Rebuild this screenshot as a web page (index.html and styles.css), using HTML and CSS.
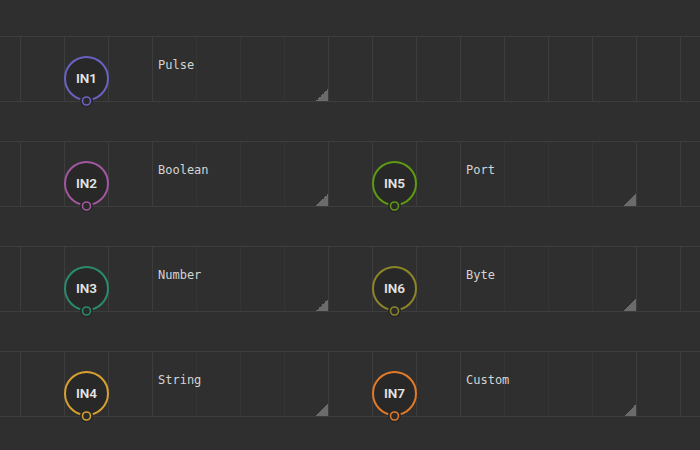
FILE: index.html
```html
<!DOCTYPE html>
<html>
<head>
<meta charset="utf-8">
<link rel="stylesheet" href="styles.css">
</head>
<body>
<div class="canvas">
  <div class="strip">
    <svg class="node col-a" width="50" height="56" viewBox="0 0 50 56"><circle class="ring" cx="24.5" cy="24.5" r="21.5" stroke="#6a62c2"/><circle class="cut" cx="24.5" cy="47" r="6.5"/><circle class="pin" cx="24.5" cy="47" r="4" stroke="#6a62c2"/><text x="24.5" y="29">IN1</text></svg>
    <div class="comment col-a">Pulse</div>
  </div>
  <div class="strip">
    <svg class="node col-a" width="50" height="56" viewBox="0 0 50 56"><circle class="ring" cx="24.5" cy="24.5" r="21.5" stroke="#a0579f"/><circle class="cut" cx="24.5" cy="47" r="6.5"/><circle class="pin" cx="24.5" cy="47" r="4" stroke="#a0579f"/><text x="24.5" y="29">IN2</text></svg>
    <div class="comment col-a">Boolean</div>
    <svg class="node col-b" width="50" height="56" viewBox="0 0 50 56"><circle class="ring" cx="24.5" cy="24.5" r="21.5" stroke="#5e9a12"/><circle class="cut" cx="24.5" cy="47" r="6.5"/><circle class="pin" cx="24.5" cy="47" r="4" stroke="#5e9a12"/><text x="24.5" y="29">IN5</text></svg>
    <div class="comment col-b">Port</div>
  </div>
  <div class="strip">
    <svg class="node col-a" width="50" height="56" viewBox="0 0 50 56"><circle class="ring" cx="24.5" cy="24.5" r="21.5" stroke="#2a8a6c"/><circle class="cut" cx="24.5" cy="47" r="6.5"/><circle class="pin" cx="24.5" cy="47" r="4" stroke="#2a8a6c"/><text x="24.5" y="29">IN3</text></svg>
    <div class="comment col-a">Number</div>
    <svg class="node col-b" width="50" height="56" viewBox="0 0 50 56"><circle class="ring" cx="24.5" cy="24.5" r="21.5" stroke="#8c8528"/><circle class="cut" cx="24.5" cy="47" r="6.5"/><circle class="pin" cx="24.5" cy="47" r="4" stroke="#8c8528"/><text x="24.5" y="29">IN6</text></svg>
    <div class="comment col-b">Byte</div>
  </div>
  <div class="strip">
    <svg class="node col-a" width="50" height="56" viewBox="0 0 50 56"><circle class="ring" cx="24.5" cy="24.5" r="21.5" stroke="#d6a030"/><circle class="cut" cx="24.5" cy="47" r="6.5"/><circle class="pin" cx="24.5" cy="47" r="4" stroke="#d6a030"/><text x="24.5" y="29">IN4</text></svg>
    <div class="comment col-a">String</div>
    <svg class="node col-b" width="50" height="56" viewBox="0 0 50 56"><circle class="ring" cx="24.5" cy="24.5" r="21.5" stroke="#e07a28"/><circle class="cut" cx="24.5" cy="47" r="6.5"/><circle class="pin" cx="24.5" cy="47" r="4" stroke="#e07a28"/><text x="24.5" y="29">IN7</text></svg>
    <div class="comment col-b">Custom</div>
  </div>
</div>
</body>
</html>
```

FILE: styles.css
```css
html, body {
  margin: 0;
  padding: 0;
  background: #2f2f2f;
  width: 700px;
  height: 450px;
  overflow: hidden;
}

.canvas {
  display: flex;
  flex-direction: column;
  gap: 39px;
  padding-top: 36px;
}

.strip {
  position: relative;
  height: 64px;
  border-top: 1px solid #3d3d3d;
  border-bottom: 1px solid #3d3d3d;
  background-image: linear-gradient(to right, #3d3d3d 1px, transparent 1px);
  background-size: 44px 100%;
  background-position: 20px 0;
  background-repeat: repeat-x;
}

.node {
  position: absolute;
  top: 17px;
  overflow: visible;
  z-index: 2;
}

.node.col-a { left: 62px; }
.node.col-b { left: 370px; }

.ring {
  fill: #282828;
  stroke-width: 2;
}

.cut {
  fill: #282828;
}

.pin {
  fill: #2a2a2a;
  stroke-width: 1.6;
}

.node text {
  font-family: Roboto, "Noto Sans", sans-serif;
  font-weight: 600;
  font-size: 13.5px;
  fill: #e4e4e4;
  text-anchor: middle;
}

.comment {
  position: absolute;
  top: 0;
  bottom: 0;
  width: 175px;
  box-sizing: border-box;
  padding: 21px 0 0 5px;
  background: rgba(47, 47, 47, 0.55);
  font-family: "DejaVu Sans Mono", "Liberation Mono", monospace;
  font-size: 12px;
  line-height: 14px;
  color: #d4d4d4;
}

.comment.col-a { left: 153px; }
.comment.col-b { left: 461px; }

.comment::after {
  content: "";
  position: absolute;
  right: 0;
  bottom: 0;
  width: 12px;
  height: 12px;
  background: linear-gradient(135deg, transparent 50%, #6b6b6b 50%);
}
```
